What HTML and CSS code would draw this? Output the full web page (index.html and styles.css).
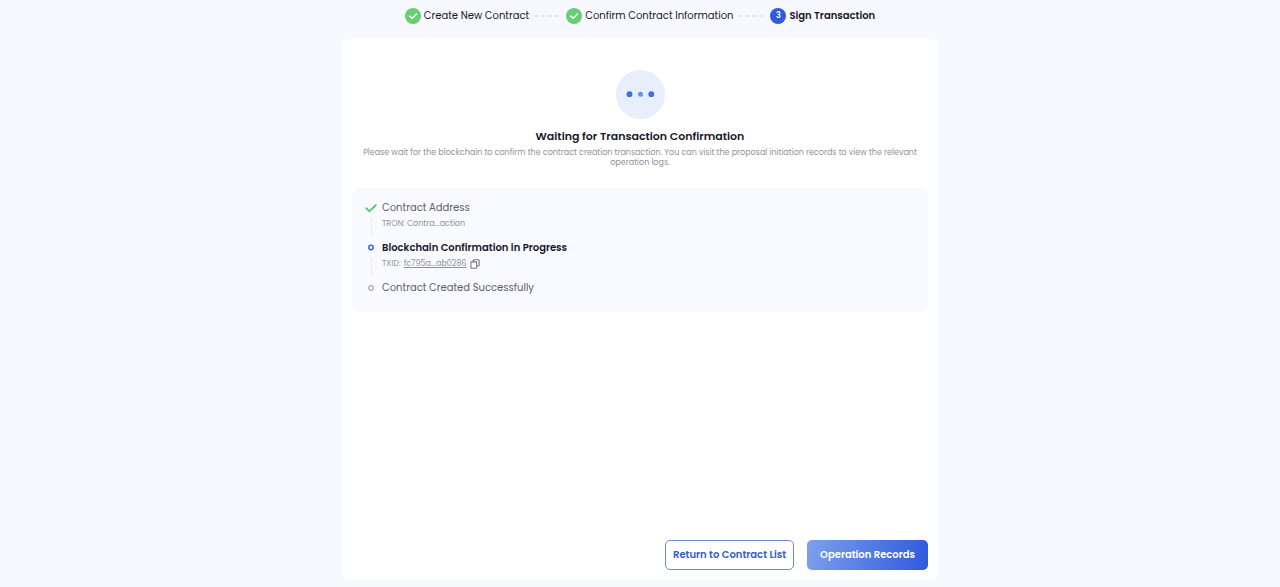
FILE: index.html
```html
<!DOCTYPE html>
<html lang="en">
<head>
<meta charset="utf-8">
<meta name="viewport" content="width=device-width, initial-scale=1">
<title>Sign Transaction</title>
<link rel="stylesheet" href="styles.css">
</head>
<body>
<main class="page">
  <ol class="steps">
    <li class="step">
      <svg class="step-icon" viewBox="0 0 16 16" aria-hidden="true"><circle cx="8" cy="8" r="8" fill="#67ce73"/><path d="M4.7 8.1 7.2 10.3 11.5 6" fill="none" stroke="#fff" stroke-width="1.4" stroke-linecap="round" stroke-linejoin="round"/></svg>
      <span>Create New Contract</span>
    </li>
    <li class="dashes" aria-hidden="true"><i></i><i></i><i></i><i></i></li>
    <li class="step">
      <svg class="step-icon" viewBox="0 0 16 16" aria-hidden="true"><circle cx="8" cy="8" r="8" fill="#67ce73"/><path d="M4.7 8.1 7.2 10.3 11.5 6" fill="none" stroke="#fff" stroke-width="1.4" stroke-linecap="round" stroke-linejoin="round"/></svg>
      <span>Confirm Contract Information</span>
    </li>
    <li class="dashes" aria-hidden="true"><i></i><i></i><i></i><i></i></li>
    <li class="step step-current" aria-current="step">
      <span class="step-number">3</span>
      <span>Sign Transaction</span>
    </li>
  </ol>

  <section class="card">
    <svg class="waiting" viewBox="0 0 49 49" aria-hidden="true"><circle cx="24.500" cy="24.500" r="24.500" fill="#e8eefb"/><circle cx="13.500" cy="24.200" r="2.900" fill="#426fdf"/><circle cx="24.500" cy="24.200" r="2.500" fill="#6b91e6"/><circle cx="35.300" cy="24.200" r="2.900" fill="#426fdf"/></svg>
    <h1 class="title">Waiting for Transaction Confirmation</h1>
    <p class="description">Please wait for the blockchain to confirm the contract creation transaction. You can visit the proposal initiation records to view the relevant operation logs.</p>

    <ul class="progress">
      <li class="entry">
        <div class="rail">
          <svg class="mark" viewBox="0 0 12 12" aria-hidden="true"><path d="M1.200 6.300 4.400 9.400 10.700 3.200" fill="none" stroke="#5cc96b" stroke-width="1.900" stroke-linecap="round" stroke-linejoin="round"/></svg>
          <span class="line"></span>
        </div>
        <div class="info">
          <h2 class="label">Contract Address</h2>
          <p class="detail">TRON: Contra...action</p>
        </div>
      </li>
      <li class="entry">
        <div class="rail">
          <svg class="mark" viewBox="0 0 12 12" aria-hidden="true"><circle cx="6" cy="5.500" r="2.200" fill="#fff" stroke="#3d67d8" stroke-width="1.500"/></svg>
          <span class="line"></span>
        </div>
        <div class="info">
          <h2 class="label label-active">Blockchain Confirmation in Progress</h2>
          <p class="detail">TXID: <a class="tx" href="#">fc795a...ab0286</a>
            <button class="copy" type="button" aria-label="Copy transaction ID"><svg viewBox="0 0 10 10" aria-hidden="true"><path d="M3.200 2.500V1.600Q3.200.800 4 .800H8.300Q9.100.800 9.100 1.600V6.200Q9.100 7 8.300 7H7.300M1.700 2.900H5.900Q6.700 2.900 6.700 3.700V8.400Q6.700 9.200 5.900 9.200H1.700Q.900 9.200.900 8.400V3.700Q.900 2.900 1.700 2.900Z" fill="none" stroke="#737783" stroke-width="1.100"/></svg></button>
          </p>
        </div>
      </li>
      <li class="entry">
        <div class="rail">
          <svg class="mark" viewBox="0 0 12 12" aria-hidden="true"><circle cx="6" cy="6" r="2.300" fill="#fff" stroke="#a3abb8" stroke-width="1.300"/></svg>
        </div>
        <div class="info">
          <h2 class="label">Contract Created Successfully</h2>
        </div>
      </li>
    </ul>

    <div class="actions">
      <button class="button button-outline" type="button">Return to Contract List</button>
      <button class="button button-primary" type="button">Operation Records</button>
    </div>
  </section>
</main>
</body>
</html>
```
FILE: styles.css
```css
* {
  box-sizing: border-box;
}

body,
h1,
h2,
p,
ol,
ul {
  margin: 0;
  padding: 0;
}

ol,
ul {
  list-style: none;
}

body {
  background: #f8f9ff;
  color: #17172b;
  font-family: Poppins, Inter, "Liberation Sans", sans-serif;
  font-size: 10px;
}

.page {
  display: flex;
  flex-direction: column;
  max-width: 596px;
  min-height: 100vh;
  margin: 0 auto;
  padding: 8px 0 7px;
}

.steps {
  display: flex;
  align-items: center;
  justify-content: center;
  margin-bottom: 15px;
}

.step {
  display: flex;
  align-items: center;
  gap: 3px;
  line-height: 16px;
}

.step-icon,
.step-number {
  width: 16px;
  height: 16px;
}

.step-number {
  border-radius: 50%;
  background: #315bdd;
  color: #fff;
  font-size: 8px;
  text-align: center;
}

.step-current {
  font-weight: 600;
}

.dashes {
  display: flex;
  gap: 3px;
  margin: 0 7px 0 5px;
}

.dashes i {
  width: 4px;
  height: 2px;
  background: #dee8fb;
}

.card {
  display: flex;
  flex: 1;
  flex-direction: column;
  padding: 31px 10px 10px;
  border-radius: 8px;
  background: #fff;
}

.waiting {
  align-self: center;
  width: 49px;
  height: 49px;
}

.title {
  margin-top: 8px;
  font-size: 11px;
  font-weight: 600;
  line-height: 18px;
  text-align: center;
}

.description {
  margin-top: 3px;
  padding: 0 4px;
  color: #92929c;
  font-size: 8px;
  line-height: 10px;
  text-align: center;
}

.progress {
  margin-top: 20px;
  padding: 12px 13px 16px;
  border-radius: 8px;
  background: #f9faff;
}

.entry {
  display: flex;
  gap: 5px;
  min-height: 40px;
}

.entry:last-child {
  min-height: 16px;
}

.rail {
  display: flex;
  flex-direction: column;
  align-items: center;
  width: 12px;
  padding-top: 2px;
}

.mark {
  width: 12px;
  height: 12px;
}

.line {
  height: 16px;
  margin-top: 5px;
  border-left: 1px dashed #e1e4ec;
}

.label {
  color: #5d5d68;
  font-size: 10px;
  font-weight: 400;
  line-height: 16px;
}

.label-active {
  color: #17172b;
  font-weight: 600;
}

.detail {
  display: flex;
  align-items: center;
  gap: 3px;
  color: #92929c;
  font-size: 8px;
  line-height: 16px;
}

.tx {
  color: inherit;
}

.copy {
  display: flex;
  padding: 0;
  border: 0;
  background: none;
}

.copy svg {
  width: 10px;
  height: 10px;
}

.actions {
  display: flex;
  justify-content: flex-end;
  gap: 13px;
  margin-top: auto;
  padding-top: 24px;
}

.button {
  height: 30px;
  padding: 0 7px;
  border: 1px solid #6d8bd0;
  border-radius: 5px;
  background: #fff;
  color: #365cce;
  font: inherit;
  font-weight: 600;
}

.button-primary {
  padding: 0 13px;
  border: 0;
  background: linear-gradient(100deg, #7da0ec, #2f59de);
  color: #fff;
}
```
